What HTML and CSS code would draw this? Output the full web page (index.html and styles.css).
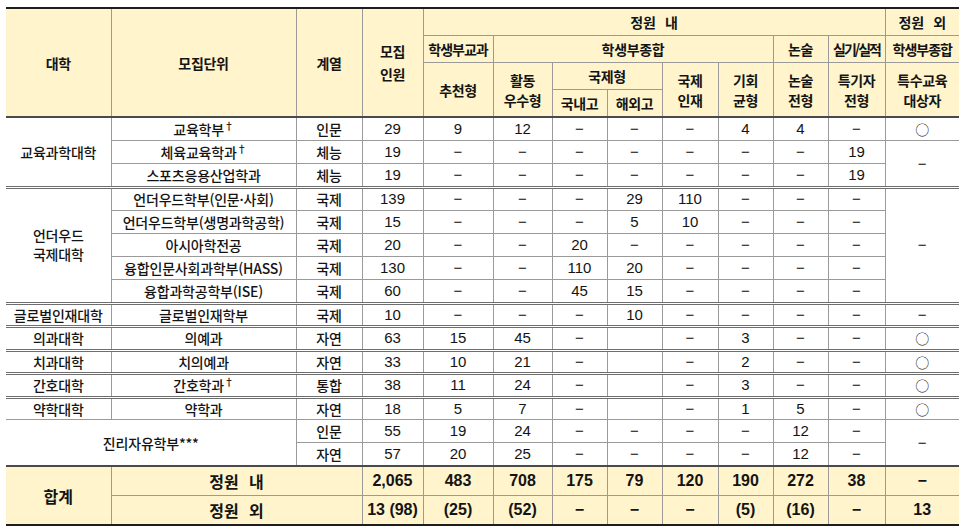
FILE: index.html
```html
<!DOCTYPE html>
<html lang="ko">
<head>
<meta charset="utf-8">
<title>모집인원</title>
<link rel="stylesheet" href="styles.css">
</head>
<body>
<div class="wrap">
<table class="quota">
<colgroup>
<col class="w105"><col class="w185"><col class="w66"><col class="w61"><col class="w70"><col class="w59"><col class="w55"><col class="w55"><col class="w56"><col class="w55"><col class="w55"><col class="w57"><col class="w74">
</colgroup>
<thead>
<tr class="r1"><th rowspan="4">대학</th><th rowspan="4">모집단위</th><th rowspan="4">계열</th><th rowspan="4" class="two">모집<br>인원</th><th colspan="8" class="wide">정원 내</th><th class="wide">정원 외</th></tr>
<tr class="r2"><th class="sq">학생부교과</th><th colspan="5">학생부종합</th><th>논술</th><th class="sq2">실기/실적</th><th class="sq">학생부종합</th></tr>
<tr class="r3"><th rowspan="2">추천형</th><th rowspan="2">활동<br>우수형</th><th colspan="2">국제형</th><th rowspan="2">국제<br>인재</th><th rowspan="2">기회<br>균형</th><th rowspan="2">논술<br>전형</th><th rowspan="2">특기자<br>전형</th><th rowspan="2">특수교육<br>대상자</th></tr>
<tr class="r4"><th>국내고</th><th>해외고</th></tr>
</thead>
<tbody>
<tr class="first"><td class="k" rowspan="3">교육과학대학</td><td class="k">교육학부<sup>†</sup></td><td class="k">인문</td><td>29</td><td>9</td><td>12</td><td>−</td><td>−</td><td>−</td><td>4</td><td>4</td><td>−</td><td class="o">○</td></tr>
<tr><td class="k">체육교육학과<sup>†</sup></td><td class="k">체능</td><td>19</td><td>−</td><td>−</td><td>−</td><td>−</td><td>−</td><td>−</td><td>−</td><td>19</td><td rowspan="2">−</td></tr>
<tr><td class="k">스포츠응용산업학과</td><td class="k">체능</td><td>19</td><td>−</td><td>−</td><td>−</td><td>−</td><td>−</td><td>−</td><td>−</td><td>19</td></tr>
<tr class="g"><td class="k two-line" rowspan="5">언더우드<br>국제대학</td><td class="k">언더우드학부(인문·사회)</td><td class="k">국제</td><td>139</td><td>−</td><td>−</td><td>−</td><td>29</td><td>110</td><td>−</td><td>−</td><td>−</td><td rowspan="5">−</td></tr>
<tr><td class="k">언더우드학부(생명과학공학)</td><td class="k">국제</td><td>15</td><td>−</td><td>−</td><td>−</td><td>5</td><td>10</td><td>−</td><td>−</td><td>−</td></tr>
<tr><td class="k">아시아학전공</td><td class="k">국제</td><td>20</td><td>−</td><td>−</td><td>20</td><td>−</td><td>−</td><td>−</td><td>−</td><td>−</td></tr>
<tr><td class="k">융합인문사회과학부(HASS)</td><td class="k">국제</td><td>130</td><td>−</td><td>−</td><td>110</td><td>20</td><td>−</td><td>−</td><td>−</td><td>−</td></tr>
<tr><td class="k">융합과학공학부(ISE)</td><td class="k">국제</td><td>60</td><td>−</td><td>−</td><td>45</td><td>15</td><td>−</td><td>−</td><td>−</td><td>−</td></tr>
<tr class="g"><td class="k">글로벌인재대학</td><td class="k">글로벌인재학부</td><td class="k">국제</td><td>10</td><td>−</td><td>−</td><td>−</td><td>10</td><td>−</td><td>−</td><td>−</td><td>−</td><td>−</td></tr>
<tr class="g"><td class="k">의과대학</td><td class="k">의예과</td><td class="k">자연</td><td>63</td><td>15</td><td>45</td><td>−</td><td></td><td>−</td><td>3</td><td>−</td><td>−</td><td class="o">○</td></tr>
<tr class="g"><td class="k">치과대학</td><td class="k">치의예과</td><td class="k">자연</td><td>33</td><td>10</td><td>21</td><td>−</td><td></td><td>−</td><td>2</td><td>−</td><td>−</td><td class="o">○</td></tr>
<tr class="g"><td class="k">간호대학</td><td class="k">간호학과<sup>†</sup></td><td class="k">통합</td><td>38</td><td>11</td><td>24</td><td>−</td><td></td><td>−</td><td>3</td><td>−</td><td>−</td><td class="o">○</td></tr>
<tr class="g"><td class="k">약학대학</td><td class="k">약학과</td><td class="k">자연</td><td>18</td><td>5</td><td>7</td><td>−</td><td></td><td>−</td><td>1</td><td>5</td><td>−</td><td class="o">○</td></tr>
<tr class="s"><td class="k" colspan="2" rowspan="2">진리자유학부***</td><td class="k">인문</td><td>55</td><td>19</td><td>24</td><td>−</td><td>−</td><td>−</td><td>−</td><td>12</td><td>−</td><td rowspan="2">−</td></tr>
<tr><td class="k">자연</td><td>57</td><td>20</td><td>25</td><td>−</td><td>−</td><td>−</td><td>−</td><td>12</td><td>−</td></tr>
</tbody>
<tfoot>
<tr class="t1"><th rowspan="2">합계</th><th colspan="2" class="wide">정원 내</th><td>2,065</td><td>483</td><td>708</td><td>175</td><td>79</td><td>120</td><td>190</td><td>272</td><td>38</td><td>−</td></tr>
<tr class="t2"><th colspan="2" class="wide">정원 외</th><td>13 (98)</td><td>(25)</td><td>(52)</td><td>−</td><td>−</td><td>−</td><td>(5)</td><td>(16)</td><td>−</td><td>13</td></tr>
</tfoot>
</table>
</div>
</body>
</html>
```

FILE: styles.css
```css
html, body {
  margin: 0;
  padding: 0;
  background: #ffffff;
}

body {
  font-family: "Liberation Sans", "Noto Sans CJK KR", sans-serif;
  color: #141414;
}

.wrap {
  padding: 7px 0 0 6px;
}

.quota {
  border-collapse: collapse;
  table-layout: fixed;
  width: 953px;
  border-top: 2px solid #1e1e1e;
  border-bottom: 2px solid #1e1e1e;
  border-left: hidden;
  border-right: hidden;
}

.w105 { width: 105px; }
.w185 { width: 185px; }
.w66 { width: 66px; }
.w61 { width: 61px; }
.w70 { width: 70px; }
.w59 { width: 59px; }
.w55 { width: 55px; }
.w56 { width: 56px; }
.w57 { width: 57px; }
.w74 { width: 74px; }

.quota th,
.quota td {
  padding: 0;
  text-align: center;
  vertical-align: middle;
  border: 1px solid #9a9a9a;
  white-space: nowrap;
  overflow: hidden;
}

/* header */
.quota thead th {
  background: #fff4cc;
  font-family: "Noto Sans CJK KR", sans-serif;
  font-weight: 700;
  font-size: 14px;
  line-height: 20px;
  letter-spacing: -0.3px;
}

.quota thead tr.r1 th,
.quota thead tr.r2 th,
.quota thead tr.r3 th,
.quota thead tr.r4 th {
  height: 26px;
}

.quota thead th.two { line-height: 23px; }
.quota thead th.sq { letter-spacing: -1px; }
.quota thead th.sq2 { letter-spacing: -2px; }
.quota .wide { word-spacing: 6px; }

/* body */
.quota tbody td {
  font-size: 15px;
  line-height: 18px;
  height: 22px;
}

.quota tbody td.k {
  font-family: "Noto Sans CJK KR", sans-serif;
  font-weight: 500;
  font-size: 14px;
  letter-spacing: -0.2px;
}

.quota tbody td.two-line {
  line-height: 19px;
}

.quota tbody td.o {
  font-family: "Noto Sans CJK KR", sans-serif;
  font-size: 14px;
  color: #222222;
}

.quota tbody tr.first td { border-top: 2px solid #4a4a4a; }
.quota tbody tr.g td {
  border-top: 3px double #6e6e6e;
  height: 20.5px;
}
.quota tbody tr.s td { border-top: 1px solid #555555; }

.quota sup {
  font-size: 10px;
  line-height: 0;
  vertical-align: 5px;
}

/* totals */
.quota tfoot th,
.quota tfoot td {
  background: #fff4cc;
  font-weight: 700;
  font-size: 16px;
  height: 28px;
}

.quota tfoot th {
  font-family: "Noto Sans CJK KR", sans-serif;
}

.quota tfoot tr.t1 th,
.quota tfoot tr.t1 td {
  border-top: 2px solid #4a4a4a;
}
```
